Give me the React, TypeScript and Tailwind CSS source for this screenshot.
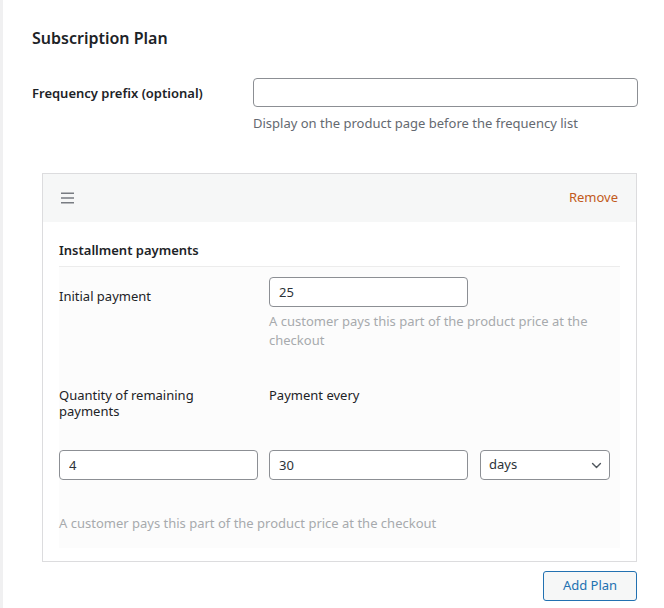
import { useState } from "react";

function IconMenu(props: React.SVGProps<SVGSVGElement>) {
  return (
    <svg viewBox="0 0 14 12" fill="none" aria-hidden="true" {...props}>
      <path d="M0 1h14M0 6h14M0 11h14" stroke="currentColor" strokeWidth="1.6" />
    </svg>
  );
}

function IconChevron(props: React.SVGProps<SVGSVGElement>) {
  return (
    <svg viewBox="0 0 12 8" fill="none" aria-hidden="true" {...props}>
      <path
        d="M1.5 1.8 6 6.2l4.5-4.4"
        stroke="currentColor"
        strokeWidth="1.6"
        strokeLinecap="round"
        strokeLinejoin="round"
      />
    </svg>
  );
}

const inputCls =
  "h-[30px] rounded-[4px] border border-[#8c8f94] bg-white px-[9px] text-[13px] text-[#2c3338] outline-none";

export default function App() {
  const [prefix, setPrefix] = useState("");
  const [initial, setInitial] = useState("25");
  const [qty, setQty] = useState("4");
  const [every, setEvery] = useState("30");
  const [unit, setUnit] = useState("days");

  return (
    <div
      className="min-h-[608px] border-l-[3px] border-[#f0f0f1] bg-white pl-[29px] pr-[26px] pt-[26px] text-[13px] text-[#1d2327]"
      style={{ fontFamily: '"Noto Sans", "Open Sans", sans-serif' }}
    >
      {/* titlu */}
      <h2 className="text-[16px] font-semibold leading-6">Subscription Plan</h2>

      {/* prefix */}
      <div className="mt-[28px] flex">
        <label className="w-[221px] pt-[5px] font-semibold leading-5">
          Frequency prefix (optional)
        </label>
        <div className="flex-1">
          <input
            value={prefix}
            onChange={(e) => setPrefix(e.target.value)}
            className="h-[29px] w-full rounded-[4px] border border-[#8c8f94] bg-white px-2 text-[13px] outline-none"
          />
          <p className="mt-[6px] leading-5 text-[#646970]">
            Display on the product page before the frequency list
          </p>
        </div>
      </div>

      {/* card plan */}
      <div className="ml-[10px] mr-[1px] mt-[40px] border border-[#dcdcde]">
        <div className="flex h-[48px] items-center justify-between bg-[#f6f7f7] pl-[18px] pr-[18px]">
          <IconMenu className="h-[12px] w-[13px] text-[#787c82]" />
          <button className="text-[13px] text-[#c25a20]">Remove</button>
        </div>

        <div className="px-[16px] pb-[13px] pt-[18px]">
          <div className="border-b border-[#ececec] pb-[6px] font-semibold leading-5">
            Installment payments
          </div>

          <div className="bg-[#fcfcfc] pb-[15px] pt-[10px]">
            {/* initial payment */}
            <div className="flex">
              <div className="w-[210px] pt-[9px] leading-5">Initial payment</div>
              <div>
                <input
                  value={initial}
                  onChange={(e) => setInitial(e.target.value)}
                  className={`${inputCls} w-[199px]`}
                />
                <p className="mt-[5px] w-[325px] leading-[19px] text-[#a7aaad]">
                  A customer pays this part of the product price at the checkout
                </p>
              </div>
            </div>

            {/* remaining payments */}
            <div className="mt-[37px] flex">
              <div className="w-[150px] leading-4">Quantity of remaining payments</div>
              <div className="ml-[60px] leading-4">Payment every</div>
            </div>

            <div className="mt-[31px] flex items-center">
              <input
                value={qty}
                onChange={(e) => setQty(e.target.value)}
                className={`${inputCls} w-[199px]`}
              />
              <input
                value={every}
                onChange={(e) => setEvery(e.target.value)}
                className={`${inputCls} ml-[11px] w-[199px]`}
              />
              <div className="relative ml-[12px] w-[130px]">
                <select
                  value={unit}
                  onChange={(e) => setUnit(e.target.value)}
                  className={`${inputCls} w-full appearance-none pl-[8px]`}
                >
                  <option value="days">days</option>
                  <option value="weeks">weeks</option>
                  <option value="months">months</option>
                  <option value="years">years</option>
                </select>
                <IconChevron className="pointer-events-none absolute right-[8px] top-[12px] h-[7px] w-[11px] text-[#50575e]" />
              </div>
            </div>

            <p className="mt-[33px] leading-5 text-[#a7aaad]">
              A customer pays this part of the product price at the checkout
            </p>
          </div>
        </div>
      </div>

      {/* add plan */}
      <div className="mr-[1px] mt-[9px] flex justify-end">
        <button className="h-[30px] w-[94px] rounded-[3px] border border-[#2271b1] bg-[#f6f7f7] text-[13px] text-[#2271b1]">
          Add Plan
        </button>
      </div>
    </div>
  );
}
